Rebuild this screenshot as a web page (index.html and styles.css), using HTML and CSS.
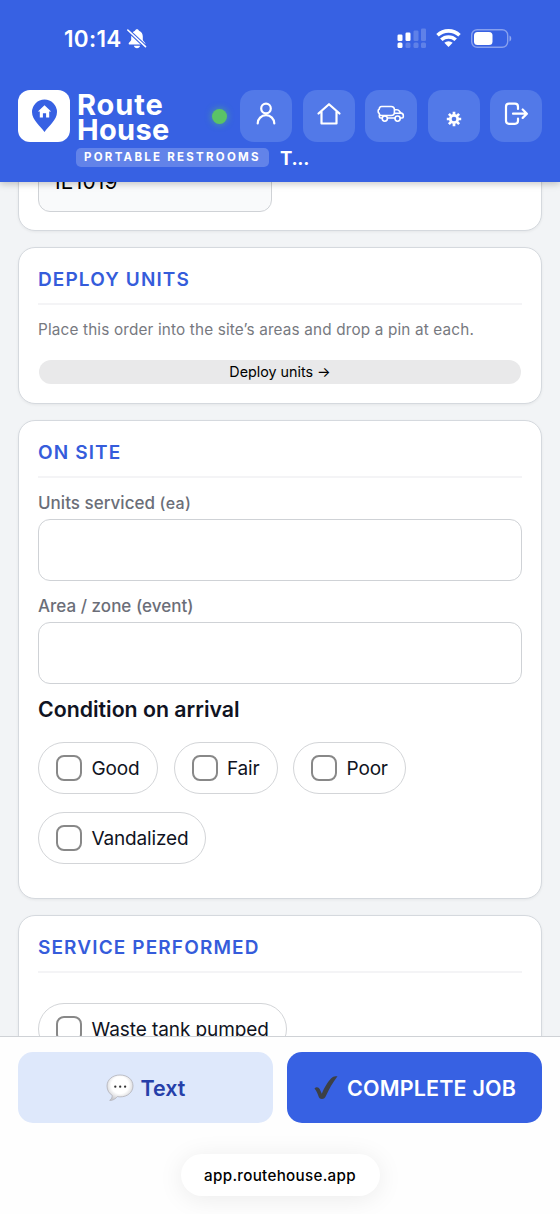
FILE: index.html
```html
<!DOCTYPE html>
<html lang="en">
<head>
<meta charset="utf-8">
<title>Route House</title>
<link rel="stylesheet" href="styles.css">
</head>
<body>
<header class="header">
  <div class="status">
    <span class="time">10:14</span>
    <svg class="bell" width="20" height="22" viewBox="0 0 20 22"><path d="M10 1.200c-1 0-1.800.6-2 1.500C5.400 3.600 4.200 5.800 4.200 8.500v3.200c0 1.400-2.600 2.700-2.600 4.100 0 .5.400.7.900.7h15c.5 0 .9-.2.900-.7 0-1.400-2.600-2.700-2.600-4.100V8.500c0-2.700-1.200-4.900-3.800-5.800-.2-.9-1-1.500-2-1.500zM6.900 17.700h6.200c-.3 1.600-1.500 2.500-3.100 2.500s-2.800-.9-3.100-2.500z" fill="#fff"/><path d="M.8 2 18.500 18.600" stroke="#3761e3" stroke-width="3.600"/><path d="M.8 2 18.500 18.600" stroke="#fff" stroke-width="1.600" stroke-linecap="round"/></svg>
    <svg class="signals" width="116" height="22" viewBox="0 0 116 22"><g fill="#fff"><rect x="0.500" y="6.500" width="5" height="6.500" rx="1.300"/><rect x="8.500" y="4.500" width="5" height="8.500" rx="1.300"/><rect x="0.500" y="14.500" width="5" height="5.500" rx="1.500"/></g><g fill="#fff" opacity=".2"><rect x="16.500" y="2.500" width="5" height="10.500" rx="1.300"/><rect x="24" y="0.500" width="5" height="12.500" rx="1.300"/><rect x="8.500" y="14.500" width="5" height="5.500" rx="1.500"/><rect x="16.500" y="14.500" width="5" height="5.500" rx="1.500"/><rect x="24" y="14.500" width="5" height="5.500" rx="1.500"/></g><g fill="none" stroke="#fff" stroke-width="3.600"><path d="M40.500 7.300a16 16 0 0 1 22 0"/><path d="M44.300 11.800a10.500 10.500 0 0 1 14.400 0"/></g><path d="m51.500 19-4.200-4.200a6.300 6.300 0 0 1 8.400 0z" fill="#fff"/><rect x="74.700" y="1.700" width="36" height="17.600" rx="5.500" fill="none" stroke="#fff" stroke-opacity=".4" stroke-width="1.400"/><rect x="77" y="4" width="18.500" height="13" rx="3.500" fill="#fff"/><path d="M112.500 7.500c2.300 1 2.300 5 0 6z" fill="#fff" opacity=".45"/></svg>
  </div>
  <div class="bar">
    <div class="logo"><svg width="52" height="52" viewBox="0 0 52 52"><path d="M26.500 42C22.500 36 14 30 14 22a12.500 12.500 0 0 1 25 0C39 30 30.500 36 26.500 42z" fill="#3761e3"/><path d="M26.500 15.300l6.600 6.200h-1.900v5.900h-3.100v-4.200h-3.200v4.200h-3.100v-5.900h-1.900z" fill="#fff"/></svg></div>
    <div class="brand"><div class="route">Route</div><div class="house">House</div></div>
    <span class="dot"></span>
    <nav class="nav">
      <a class="navbtn"><svg viewBox="0 0 52 52"><circle cx="26" cy="18.500" r="4.800"/><path d="M17.700 33.500a8.300 8.300 0 0 1 16.600 0"/></svg></a>
      <a class="navbtn"><svg viewBox="0 0 52 52"><path d="M15.500 23.500 26 14.200l10.500 9.300M18.500 21.500v12h15v-12"/></svg></a>
      <a class="navbtn"><svg class="thin" viewBox="0 0 52 52"><path d="M17.200 28h-1.500c-1 0-1.400-.5-1.400-1.500v-1M16.500 16.500h9.600c2 0 3.300 1.300 3.300 3.300v2.400c0 2-1.300 3.300-3.300 3.300h-9.600c-1.500 0-2.300-1-2.300-2.300-.7-.3-1-.6-1-1.200v-1.500c0-.6.300-.9 1-1.200.1-1.700.9-2.800 2.300-2.800zM29.600 19.800h2.400c1.200 0 1.800.4 2.500 1.400l1.300 1.700c1.900.4 2.500 1 2.500 2.500v1.400c0 .8-.4 1.200-1.200 1.200h-1.800M22.500 28H30M30.500 23.200h5.300"/><circle cx="19.800" cy="28.600" r="2.600"/><circle cx="32.600" cy="28.600" r="2.600"/></svg></a>
      <a class="navbtn"><svg class="gear" viewBox="0 0 52 52"><circle cx="26" cy="29" r="3.700"/><path d="M26 21.800v3M26 33.200v3M18.800 29h3M30.200 29h3M20.900 23.900l2.200 2.200M28.900 31.900l2.200 2.200M31.100 23.900l-2.200 2.200M23.100 31.900l-2.200 2.200"/></svg></a>
      <a class="navbtn"><svg viewBox="0 0 52 52"><path d="M28 19v-2.300c0-2-1-3-3-3h-6c-2 0-3 1-3 3v14.100c0 2 1 3 3 3h6c2 0 3-1 3-3V28.500M23 23.700h13M32.700 19.500l4.200 4.200-4.200 4.200"/></svg></a>
    </nav>
  </div>
  <div class="sub"><span class="tag">PORTABLE RESTROOMS</span><span class="tenant">T...</span></div>
</header>
<main class="main">
  <section class="card first"><div class="field ro">IE1019</div></section>
  <section class="card deploy">
    <h2>DEPLOY UNITS</h2>
    <p class="hint">Place this order into the site’s areas and drop a pin at each.</p>
    <button class="pillbtn">Deploy units →</button>
  </section>
  <section class="card onsite">
    <h2>ON SITE</h2>
    <label class="l1">Units serviced <small>(ea)</small></label>
    <div class="field"></div>
    <label class="l2">Area / zone (event)</label>
    <div class="field"></div>
    <h3>Condition on arrival</h3>
    <div class="chips">
      <div class="chip c1"><i></i>Good</div>
      <div class="chip c2"><i></i>Fair</div>
      <div class="chip c3"><i></i>Poor</div>
      <div class="chip c4"><i></i>Vandalized</div>
    </div>
  </section>
  <section class="card service">
    <h2>SERVICE PERFORMED</h2>
    <div class="chips"><div class="chip c5"><i></i>Waste tank pumped</div></div>
  </section>
</main>
<footer class="footer">
  <div class="actions">
    <button class="text"><svg width="28" height="28" viewBox="0 0 28 28"><defs><radialGradient id="b" cx=".5" cy=".4" r=".6"><stop offset=".55" stop-color="#fff"/><stop offset="1" stop-color="#c9c9cd"/></radialGradient></defs><path d="M14 1C6.500 1 1 5.700 1 12c0 4.300 2.300 7.700 5.200 9.300.2 2.200-.9 3.900-2.500 5 .1.500 4.500.2 7.600-3.700.8.200 1.800.3 2.700.3 7.500 0 13-4.700 13-11S21.500 1 14 1z" fill="url(#b)" stroke="#aaaab2" stroke-width=".7"/><circle cx="9.300" cy="12.700" r="1.150" fill="#333"/><circle cx="14.200" cy="12.700" r="1.150" fill="#333"/><circle cx="19.100" cy="12.700" r="1.150" fill="#333"/></svg>Text</button>
    <button class="done"><svg width="26" height="26" viewBox="0 0 26 26"><path d="M1.500 13.500c1.500-2 4.200-1.800 5.300.7l2 4.600C11.500 12 15.500 5.500 19.500 2.300c1.300-1 3-1.200 5-1.100C19.500 8 16 14 12.900 21c-.9 2-1.900 2.900-4 2.900-1.700 0-2.500-.6-3.200-2.200-1.200-2.800-1.900-5.700-4.200-8.200z" fill="#3c4046"/></svg>COMPLETE JOB</button>
  </div>
  <div class="url">app.routehouse.app</div>
</footer>
</body>
</html>
```
FILE: styles.css
```css
* { box-sizing: border-box; }
body { margin: 0; width: 560px; height: 1214px; overflow: hidden; display: flex; flex-direction: column; background: #f2f4f6; color: #101322; font-family: Inter, "Liberation Sans", sans-serif; }
button { font: inherit; border: 0; padding: 0; }
.header { height: 182px; flex: none; background: #3761e3; color: #fff; position: relative; z-index: 1; box-shadow: 0 2px 7px rgba(0,0,0,.22); }
.status { height: 90px; display: flex; padding: 0 47px 0 64px; }
.time { font-size: 22.500px; line-height: 28px; font-weight: 600; margin-top: 25px; letter-spacing: .3px; }
.bell { margin: 28px 0 0 5px; }
.signals { margin: 27.500px 0 0 auto; }
.bar { display: flex; padding: 0 18px; height: 52px; }
.logo { width: 52px; height: 52px; border-radius: 12px; background: #fff; }
.brand { font-size: 29px; line-height: 25px; font-weight: 700; margin: 1.500px 0 0 7px; width: 100px; white-space: nowrap; }
.route { letter-spacing: .9px; }
.house { letter-spacing: .3px; }
.dot { width: 15px; height: 15px; border-radius: 50%; background: #5ac466; box-shadow: 0 0 7px rgba(90,196,102,.7); margin: 18.500px 0 0 35px; }
.nav { display: flex; gap: 10.500px; margin-left: auto; }
.navbtn { width: 52px; height: 52px; border-radius: 14px; background: #5279e8; }
.navbtn svg { display: block; width: 52px; height: 52px; fill: none; stroke: #fff; stroke-width: 2.200; stroke-linecap: round; stroke-linejoin: round; }
.navbtn .thin { stroke-width: 1.600; }
.navbtn .gear { stroke-width: 2.700; stroke-linecap: butt; }
.sub { display: flex; align-items: center; padding: 4.500px 0 0 76px; }
.tag { width: 193px; height: 19px; border-radius: 5px; background: #6283e9; padding-left: 8px; font-size: 11.500px; line-height: 19px; font-weight: 700; letter-spacing: 2.260px; white-space: nowrap; }
.tenant { font-size: 18.500px; line-height: 22px; font-weight: 700; margin-left: 11px; letter-spacing: -.3px; }
.main { flex: 1; min-height: 0; overflow: hidden; padding: 0 18px; display: flex; flex-direction: column; gap: 16px; }
.card { flex: none; background: #fff; border: 1.500px solid #d5d9de; border-radius: 17px; padding: 19px; box-shadow: 0 1px 3px rgba(0,0,0,.06); }
.first { margin-top: -60px; height: 109px; display: flex; align-items: flex-end; padding-bottom: 18px; }
.field { height: 62px; border: 1px solid #cfd2d6; border-radius: 12px; background: #fff; }
.ro { width: 234px; background: #f9fafb; color: #000; padding-left: 16px; font-size: 21px; line-height: 61px; letter-spacing: .2px; }
.deploy { height: 157px; }
.onsite { height: 479px; }
.service { height: 300px; }
h2 { margin: 0 0 14px; height: 38px; border-bottom: 2.500px solid #f4f4f6; font-size: 19px; line-height: 26px; font-weight: 600; color: #355cdb; letter-spacing: 1.130px; }
.hint { margin: 0; font-size: 15.300px; line-height: 21px; height: 20px; color: #77797f; white-space: nowrap; letter-spacing: .16px; }
.pillbtn { display: block; width: 482px; height: 24px; border-radius: 12px; background: #e9e9ea; margin: 21px auto 0; font-size: 14.300px; line-height: 24px; color: #000; }
label { display: block; height: 27px; font-size: 17px; line-height: 22px; font-weight: 500; color: #6b6e78; letter-spacing: .02px; }
label small { font-size: 16px; letter-spacing: .3px; }
.l2 { height: 41px; padding-top: 14px; }
h3 { margin: 12px 0 20px; font-size: 21.300px; line-height: 26px; font-weight: 600; }
.chips { display: flex; flex-wrap: wrap; gap: 18px 15.500px; }
.chip { height: 52px; border: 1px solid #d3d5d8; border-radius: 26px; display: flex; align-items: center; gap: 9.500px; padding-left: 17px; font-size: 19px; white-space: nowrap; letter-spacing: -.15px; }
.chip i { width: 26px; height: 26px; border: 2px solid #888; border-radius: 8px; flex: none; }
.c1 { width: 120px; }
.c2 { width: 104px; }
.c3 { width: 113px; }
.c4 { width: 168px; }
.c5 { width: 249px; letter-spacing: -.08px; }
.service .chips { margin-top: 30px; }
.footer { height: 178px; flex: none; background: #fefefe; border-top: 1px solid #cfd2d6; padding: 15px 18px 0; }
.actions { display: grid; grid-template-columns: 1fr 1fr; gap: 14px; height: 71px; }
.actions button { border-radius: 15px; display: flex; justify-content: center; align-items: center; font-size: 21.500px; font-weight: 600; white-space: nowrap; }
.actions .text { background: #dee8fb; color: #263fa9; gap: 7px; }
.actions .done { background: #3761e3; color: #fff; gap: 8px; letter-spacing: .18px; }
.url { width: 199px; height: 42px; margin: 31px auto 0; border-radius: 21px; background: #fff; box-shadow: 0 3px 26px rgba(0,0,0,.08); text-align: center; font-size: 15.200px; line-height: 43px; font-weight: 500; color: #000; letter-spacing: .3px; }
```
